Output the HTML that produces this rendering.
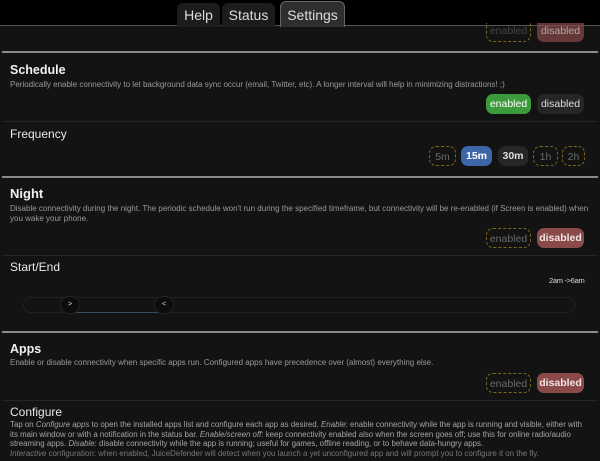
<!DOCTYPE html>
<html><head><style>
*{margin:0;padding:0;box-sizing:border-box}
body{width:600px;height:461px;overflow:hidden;background:#131313;font-family:"Liberation Sans",sans-serif;color:#ddd;position:relative}
.a{position:absolute;white-space:nowrap}
.top{left:0;top:0;width:600px;height:26px;background:#000;border-bottom:1px solid #555}
.tab{top:3px;height:24px;border-radius:6px 6px 0 0;background:#1c1c1c;color:#ddd;font-size:14px;text-align:center;line-height:24px}
.sep{left:2px;width:596px;height:2px;background:#8a8a8a}
.thin{left:2px;width:596px;height:1px;background:#262626}
h2{position:absolute;font-size:12.5px;font-weight:bold;color:#f0f0f0}
h3{position:absolute;font-size:12px;font-weight:normal;color:#e8e8e8}
.d{position:absolute;font-size:8px;color:#9a9a9a;line-height:9.8px}
.b{position:absolute;height:20px;border-radius:7px;font-size:10.5px;text-align:center;line-height:20px}
.off{border:1px dashed #7a6a1a;color:#6a6a6a}
.dis{background:#262626;color:#ddd}
.red{background:#8a4a4a;color:#f2e4e4;font-weight:bold}
.grn{background:#3c9a3c;color:#fff}
.blu{background:#3d66a8;color:#fff;font-weight:bold}
</style></head><body>
<div class="a top"></div>
<div class="a tab" style="left:177px;width:43px">Help</div>
<div class="a tab" style="left:222px;width:53px">Status</div>
<div class="a tab" style="left:280px;width:65px;background:#2e2e2e;border:1px solid #666;border-bottom:none;top:1px;height:26px;line-height:26px">Settings</div>
<div class="b off" style="left:486px;top:23px;width:45px;height:19px;line-height:17px;border-top:none;border-radius:0 0 7px 7px;color:#444">enabled</div>
<div class="b red" style="left:537px;top:23px;width:47px;height:19px;line-height:17px;border-radius:0 0 7px 7px;opacity:.7;font-weight:normal">disabled</div>
<div class="a sep" style="top:51px"></div>
<h2 style="left:10px;top:63px">Schedule</h2>
<div class="d" style="left:10px;top:80px">Periodically enable connectivity to let background data sync occur (email, Twitter, etc). A longer interval will help in minimizing distractions! ;)</div>
<div class="b grn" style="left:486px;top:94px;width:45px">enabled</div>
<div class="b dis" style="left:537px;top:94px;width:47px">disabled</div>
<div class="a thin" style="top:121px"></div>
<h3 style="left:10px;top:127px">Frequency</h3>
<div class="b off" style="left:429px;top:146px;width:27px">5m</div>
<div class="b blu" style="left:461px;top:146px;width:31px">15m</div>
<div class="b dis" style="left:498px;top:146px;width:30px;font-weight:bold">30m</div>
<div class="b off" style="left:533px;top:146px;width:25px">1h</div>
<div class="b off" style="left:562px;top:146px;width:23px">2h</div>
<div class="a sep" style="top:176px"></div>
<h2 style="left:10px;top:186px;font-size:13px">Night</h2>
<div class="d" style="left:10px;top:204px">Disable connectivity during the night. The periodic schedule won't run during the specified timeframe, but connectivity will be re-enabled (if Screen is enabled) when<br>you wake your phone.</div>
<div class="b off" style="left:486px;top:228px;width:45px">enabled</div>
<div class="b red" style="left:537px;top:228px;width:47px">disabled</div>
<div class="a thin" style="top:255px"></div>
<h3 style="left:10px;top:260px">Start/End</h3>
<div class="a" style="left:549px;top:276px;font-size:7.5px;color:#ddd;letter-spacing:-0.3px">2am -&gt;6am</div>
<div class="a" style="left:23px;top:297px;width:552px;height:16px;border:1px solid #222;border-radius:8px"></div>
<div class="a" style="left:70px;top:297px;width:94px;height:16px;border-bottom:1px solid #3a4a6a"></div>
<div class="a" style="left:60px;top:296px;width:20px;height:18px;border-radius:9px;background:#0c0c0c;border:1px solid #222;font-size:7px;text-align:center;line-height:16px;color:#ddd">&gt;</div>
<div class="a" style="left:154px;top:296px;width:20px;height:18px;border-radius:9px;background:#0c0c0c;border:1px solid #222;font-size:7px;text-align:center;line-height:16px;color:#ddd">&lt;</div>
<div class="a sep" style="top:331px"></div>
<h2 style="left:10px;top:342px">Apps</h2>
<div class="d" style="left:10px;top:358px">Enable or disable connectivity when specific apps run. Configured apps have precedence over (almost) everything else.</div>
<div class="b off" style="left:486px;top:373px;width:45px">enabled</div>
<div class="b red" style="left:537px;top:373px;width:47px">disabled</div>
<div class="a thin" style="top:400px"></div>
<h3 style="left:10px;top:405px">Configure</h3>
<div class="d" style="left:10px;top:420px;color:#a5a5a5;font-size:7.9px;line-height:9.5px">Tap on <i>Configure apps</i> to open the installed apps list and configure each app as desired. <i>Enable</i>: enable connectivity while the app is running and visible, either with<br>its main window or with a notification in the status bar. <i>Enable/screen off</i>: keep connectivity enabled also when the screen goes off; use this for online radio/audio<br>streaming apps. <i>Disable</i>: disable connectivity while the app is running; useful for games, offline reading, or to behave data-hungry apps.<br><span style="color:#777"><i>Interactive</i> configuration: when enabled, JuiceDefender will detect when you launch a yet unconfigured app and will prompt you to configure it on the fly.</span></div>
</body></html>
